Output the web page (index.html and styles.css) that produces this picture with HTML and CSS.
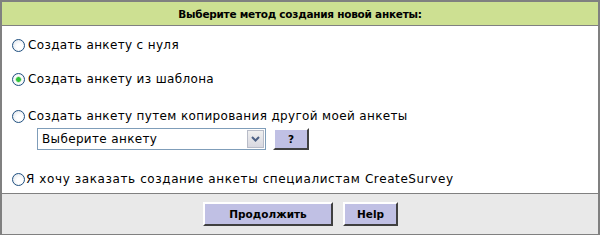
FILE: index.html
```html
<!DOCTYPE html>
<html>
<head>
<meta charset="utf-8">
<link rel="stylesheet" href="styles.css">
</head>
<body>
<div class="panel">
  <div class="head">Выберите метод создания новой анкеты:</div>
  <div class="body">
    <label class="opt o1"><input type="radio" name="m" class="rb"><span>Создать анкету с нуля</span></label>
    <label class="opt o2"><input type="radio" name="m" class="rb" checked><span>Создать анкету из шаблона</span></label>
    <label class="opt o3"><input type="radio" name="m" class="rb"><span>Создать анкету путем копирования другой моей анкеты</span></label>
    <div class="selrow">
      <div class="sel"><span class="seltext">Выберите анкету</span><span class="arrow"><svg width="9" height="6" viewBox="0 0 9 6"><path d="M1 1 L4.5 4.5 L8 1" fill="none" stroke="#4d6185" stroke-width="2"/></svg></span></div>
      <button class="btn q">?</button>
    </div>
    <label class="opt o4"><input type="radio" name="m" class="rb"><span class="t4">Я хочу заказать создание анкеты специалистам CreateSurvey</span></label>
  </div>
  <div class="foot">
    <button class="btn cont">Продолжить</button>
    <button class="btn help">Help</button>
  </div>
</div>
</body>
</html>
```
FILE: styles.css
```css
html, body { margin: 0; padding: 0; background: #fff; }
.panel {
  width: 600px; height: 235px; box-sizing: border-box;
  border: 2px solid #808080; border-bottom-width: 1px;
  display: flex; flex-direction: column;
  font-family: "DejaVu Sans", Verdana, sans-serif;
}
.head {
  height: 23px; background: #cde092; border-bottom: 1px solid #808080;
  display: flex; align-items: center; justify-content: center;
  font-weight: bold; font-size: 10.5px; color: #000; letter-spacing: -0.25px;
}
.body { flex: 1; display: flex; flex-direction: column; padding-left: 10px; border-bottom: 1px solid #808080; }
.opt { display: flex; align-items: center; font-size: 12px; color: #000; height: 16px; letter-spacing: 0.35px; }
.o1 { margin-top: 11px; }
.o2 { margin-top: 18px; }
.o3 { margin-top: 21px; }
.o4 { margin-top: 21px; }
.t4 { margin-left: -2px; letter-spacing: 0.6px; }
.rb {
  appearance: none; -webkit-appearance: none; margin: 0 3px 0 0;
  width: 13px; height: 13px; border-radius: 50%;
  border: 1px solid #1f4f7f; box-sizing: border-box;
  background: radial-gradient(circle at 60% 60%, #ffffff 30%, #d8dfe6 100%);
}
.rb:checked {
  background: radial-gradient(circle, #2fc33a 0 2px, #a0e0a0 2.5px, #ffffff 3.5px, #dde3e8 100%);
}
.selrow { display: flex; align-items: center; margin-top: 4px; padding-left: 25px; gap: 7px; }
.sel {
  width: 229px; height: 22px; box-sizing: border-box; border: 1px solid #7f9db9;
  display: flex; align-items: center; justify-content: space-between; background: #fff;
}
.seltext { font-size: 12px; padding-left: 4px; letter-spacing: 0.35px; }
.arrow {
  width: 17px; height: 18px; margin-right: 1px; box-sizing: border-box;
  background: linear-gradient(#f0f0f0, #d8d8e0); border: 1px solid #b8bcc8;
  display: flex; align-items: center; justify-content: center;
}
.btn {
  font-family: "DejaVu Sans", Tahoma, sans-serif; font-weight: bold; font-size: 10.5px;
  background: #c0c0e4; color: #000; padding: 0; box-sizing: border-box;
  border: 2px solid; border-color: #ffffff #404040 #404040 #ffffff;
}
.q { width: 36px; height: 22px; }
.foot { height: 40px; background: #e9e9e9; display: flex; justify-content: center; align-items: center; gap: 10px; padding-left: 1px; }
.cont { width: 130px; height: 24px; }
.help { width: 55px; height: 24px; }
```
